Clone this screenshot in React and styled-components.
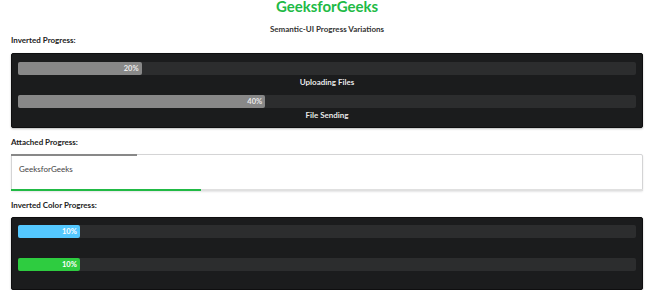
import React from 'react';
import styled, { createGlobalStyle } from 'styled-components';

const GlobalStyle = createGlobalStyle`
  html, body {
    margin: 0;
    padding: 0;
    background: #ffffff;
  }
  body {
    font-family: Lato, "Open Sans", "Liberation Sans", sans-serif;
    font-size: 8px;
    color: rgba(0, 0, 0, 0.87);
  }
`;

const Page = styled.div`
  padding: 0 17px 0 11px;
`;

const Title = styled.h1`
  margin: 0;
  font-size: 15px;
  line-height: 13px;
  font-weight: 700;
  text-align: center;
  color: #21ba45;
`;

const Subtitle = styled.div`
  margin-top: 11px;
  font-size: 8px;
  line-height: 11px;
  font-weight: 700;
  text-align: center;
  color: #333;
`;

const Heading = styled.div`
  margin: ${p => (p.$first ? '0 0 7px' : '9px 0 6px')};
  font-size: 8px;
  line-height: 11px;
  font-weight: 700;
  color: #222;
`;

const DarkSegment = styled.div`
  display: flex;
  flex-direction: column;
  gap: ${p => p.$gap}px;
  padding: ${p => p.$pad};
  background: #1b1c1d;
  border: 1px solid #0e0e0f;
  border-radius: 2px;
  box-shadow: 0 1px 2px 0 rgba(34, 36, 38, 0.3);
`;

const Track = styled.div`
  height: 13px;
  border-radius: 2px;
  background: rgba(255, 255, 255, 0.08);
  display: flex;
`;

const Bar = styled.div`
  display: flex;
  align-items: center;
  justify-content: flex-end;
  padding-right: 3px;
  box-sizing: border-box;
  border-radius: 2px;
  background: ${p => p.$color};
  font-size: 7.5px;
  font-weight: 700;
  color: ${p => (p.$dim ? 'rgba(255, 255, 255, 0.85)' : '#ffffff')};
`;

const Label = styled.div`
  margin-top: 2px;
  font-size: 8px;
  line-height: 11px;
  font-weight: 700;
  text-align: center;
  color: rgba(255, 255, 255, 0.92);
`;

const AttachedSegment = styled.div`
  position: relative;
  padding: 9px 6px 15px 7px;
  border: 1px solid #d4d4d5;
  border-radius: 2px;
  box-shadow: 0 1px 2px 0 rgba(34, 36, 38, 0.12);
  font-size: 8px;
  line-height: 11px;
  color: #444;
`;

const AttachedBar = styled.div`
  position: absolute;
  left: -1px;
  right: -1px;
  ${p => (p.$bottom ? 'bottom: -1px;' : 'top: -1px;')}
  height: 2px;
  background: ${p => (p.$bottom ? '#e0e0e0' : 'transparent')};
  &::before {
    content: "";
    display: block;
    height: 100%;
    width: ${p => p.$value}%;
    background: ${p => p.$color};
  }
`;

const Progress = ({ value, color, dim, label }) => (
  <div>
    <Track>
      <Bar $color={color} $dim={dim} style={{ width: `${value}%` }}>{value}%</Bar>
    </Track>
    {label && <Label>{label}</Label>}
  </div>
);

export default function App() {
  return (
    <Page>
      <GlobalStyle />
      <Title>GeeksforGeeks</Title>
      <Subtitle>Semantic-UI Progress Variations</Subtitle>

      <Heading $first>Inverted Progress:</Heading>
      <DarkSegment $gap={7} $pad="8px 6px 6px 6px">
        <Progress value={20} color="#888888" dim label="Uploading Files" />
        <Progress value={40} color="#888888" dim label="File Sending" />
      </DarkSegment>

      <Heading>Attached Progress:</Heading>
      <AttachedSegment>
        <AttachedBar $value={20} $color="#888888" />
        GeeksforGeeks
        <AttachedBar $bottom $value={30} $color="#21ba45" />
      </AttachedSegment>

      <Heading>Inverted Color Progress:</Heading>
      <DarkSegment $gap={20} $pad="7px 6px 18px 6px">
        <Progress value={10} color="#54c8ff" />
        <Progress value={10} color="#2ecc40" />
      </DarkSegment>
    </Page>
  );
}
